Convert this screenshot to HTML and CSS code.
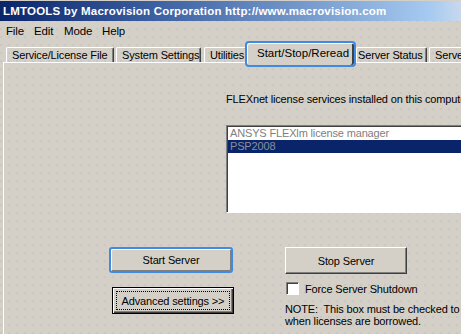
FILE: index.html
```html
<!DOCTYPE html>
<html>
<head>
<meta charset="utf-8">
<link rel="stylesheet" href="styles.css">
</head>
<body>
<div class="window">
  <div class="titlebar"><span class="title">LMTOOLS by Macrovision Corporation http://www.macrovision.com</span></div>
  <div class="menubar">
    <span class="menu m-file">File</span>
    <span class="menu m-edit">Edit</span>
    <span class="menu m-mode">Mode</span>
    <span class="menu m-help">Help</span>
  </div>
  <div class="tabstrip">
    <div class="tab t1">Service/License File</div>
    <div class="tab t2">System Settings</div>
    <div class="tab t3">Utilities</div>
    <div class="tab selected">Start/Stop/Reread</div>
    <div class="tab t5">Server Status</div>
    <div class="tab t6">Server Diags</div>
  </div>
  <div class="panel">
    <div class="services">
      <p class="label">FLEXnet license services installed on this computer</p>
      <div class="listbox">
        <div class="item">ANSYS FLEXlm license manager</div>
        <div class="item sel">PSP2008</div>
      </div>
    </div>
    <div class="controls">
      <div class="col col1">
        <div class="btn focus">Start Server</div>
        <div class="btn default"><span class="focusrect">Advanced settings &gt;&gt;</span></div>
      </div>
      <div class="col col2">
        <div class="btn stop">Stop Server</div>
        <div class="check"><span class="box"></span><span>Force Server Shutdown</span></div>
        <p class="note">NOTE:&nbsp; This box must be checked to shut down a license server<br>when licenses are borrowed.</p>
      </div>
      <div class="col col3">
        <div class="btn reread">ReRead License File</div>
      </div>
    </div>
  </div>
</div>
</body>
</html>
```

FILE: styles.css
```css
* { box-sizing: border-box; }
html, body {
  margin: 0;
  padding: 0;
  width: 461px;
  height: 334px;
  overflow: hidden;
}
body {
  font-family: "Liberation Sans", Arial, sans-serif;
  font-size: 11px;
  letter-spacing: -0.15px;
  color: #000;
  background-color: #d4d0c8;
  background-image: radial-gradient(circle, #c0c3c8 0.6px, rgba(0,0,0,0) 0.9px);
  background-size: 8px 8px;
  background-position: -3px 1px;
}
.window {
  width: 461px;
  height: 334px;
  display: flex;
  flex-direction: column;
}
.titlebar {
  height: 20px;
  margin-top: 1px;
  flex: none;
  background: linear-gradient(90deg, #0a246a 0px, #3a5ea0 150px, #a6caf0 430px, #c8d8ee 461px);
  display: flex;
  align-items: center;
  padding-left: 3px;
}
.title {
  color: #fff;
  font-weight: bold;
  font-size: 11.5px;
  letter-spacing: 0.2px;
  white-space: nowrap;
}
.menubar {
  height: 19px;
  flex: none;
  display: flex;
  align-items: center;
  padding-left: 6px;
  font-size: 11.5px;
}
.menu { flex: none; white-space: nowrap; }
.m-file { width: 28px; }
.m-edit { width: 30px; }
.m-mode { width: 38px; }
.tabstrip {
  height: 22px;
  flex: none;
  display: flex;
  align-items: flex-end;
  padding-left: 6px;
  white-space: nowrap;
}
.tab {
  height: 15px;
  padding: 0 0 0 5px;
  line-height: 14px;
  border-top: 1px solid #fff;
  border-left: 1px solid #fff;
  border-right: 1px solid #404040;
  box-shadow: inset -1px 0 #808080;
  border-radius: 2px 2px 0 0;
  margin-right: 1px;
  flex: none;
  overflow: hidden;
}
.t1 { width: 108px; }
.t2 { width: 85px; margin-left: 1px; }
.t3 { width: 43px; margin-left: 2px; }
.t5 { width: 71px; padding-left: 1px; }
.t6 { width: 80px; margin-left: 1px; }
.tab.selected {
  position: relative;
  z-index: 2;
  width: 111px;
  height: 26px;
  margin: 0 0 -5px -3px;
  border: 2px solid #3d8be2;
  border-radius: 4px;
  background: #d4d0c8;
  box-shadow: inset 1px 1px #fff, inset -2px 0 #404040;
  line-height: 20px;
  padding: 0 0 0 10px;
  font-size: 11.5px;
  letter-spacing: 0;
}
.panel {
  flex: 1;
  margin-left: 3px;
  border-top: 1px solid #fff;
  border-left: 1px solid #fff;
  display: flex;
  flex-direction: column;
}
.services {
  margin-left: 222px;
  margin-top: 30px;
}
.label {
  margin: 0;
  line-height: 13px;
  white-space: nowrap;
}
.listbox {
  margin-top: 19px;
  width: 320px;
  height: 88px;
  background: #fff;
  border-top: 1px solid #808080;
  border-left: 1px solid #808080;
  border-bottom: 1px solid #fff;
  box-shadow: inset 1px 1px #404040;
  padding: 1px 0 0 1px;
}
.item {
  height: 13px;
  line-height: 13px;
  padding-left: 2px;
  color: #808080;
  white-space: nowrap;
}
.item.sel {
  background: #0a246a;
  color: #8a8f9c;
}
.controls {
  margin-top: 34px;
  display: flex;
  align-items: flex-start;
  margin-left: 105px;
}
.col { display: flex; flex-direction: column; flex: none; }
.col2 { margin-left: 51px; }
.col3 { margin-left: 50px; }
.btn {
  display: flex;
  align-items: center;
  justify-content: center;
  white-space: nowrap;
  background: #d4d0c8;
  border-top: 1px solid #fff;
  border-left: 1px solid #fff;
  border-right: 1px solid #404040;
  border-bottom: 1px solid #404040;
  box-shadow: inset -1px -1px #808080;
}
.btn.focus {
  width: 124px;
  height: 26px;
  border: 2px solid #3d8be2;
  border-radius: 3px;
  box-shadow: inset 1px 1px #fff, inset -1px -1px #808080;
}
.btn.default {
  width: 122px;
  height: 27px;
  margin-top: 14px;
  margin-left: 3px;
  border: 1px solid #000;
  box-shadow: inset 1px 1px #fff, inset -1px -1px #404040, inset -2px -2px #808080;
  padding: 3px;
}
.focusrect {
  flex: 1;
  align-self: stretch;
  display: flex;
  align-items: center;
  justify-content: center;
  border: 1px dotted #000;
}
.btn.stop {
  width: 122px;
  height: 27px;
}
.btn.reread {
  width: 122px;
  height: 27px;
}
.check {
  display: flex;
  align-items: center;
  margin-top: 8px;
  margin-left: 1px;
  height: 13px;
}
.box {
  width: 13px;
  height: 13px;
  background: #fff;
  border-top: 1px solid #808080;
  border-left: 1px solid #808080;
  border-right: 1px solid #fff;
  border-bottom: 1px solid #fff;
  box-shadow: inset 1px 1px #404040;
  margin-right: 6px;
  flex: none;
}
.note {
  margin: 8px 0 0 0;
  line-height: 12px;
  white-space: nowrap;
}
p { margin: 0; }
```
